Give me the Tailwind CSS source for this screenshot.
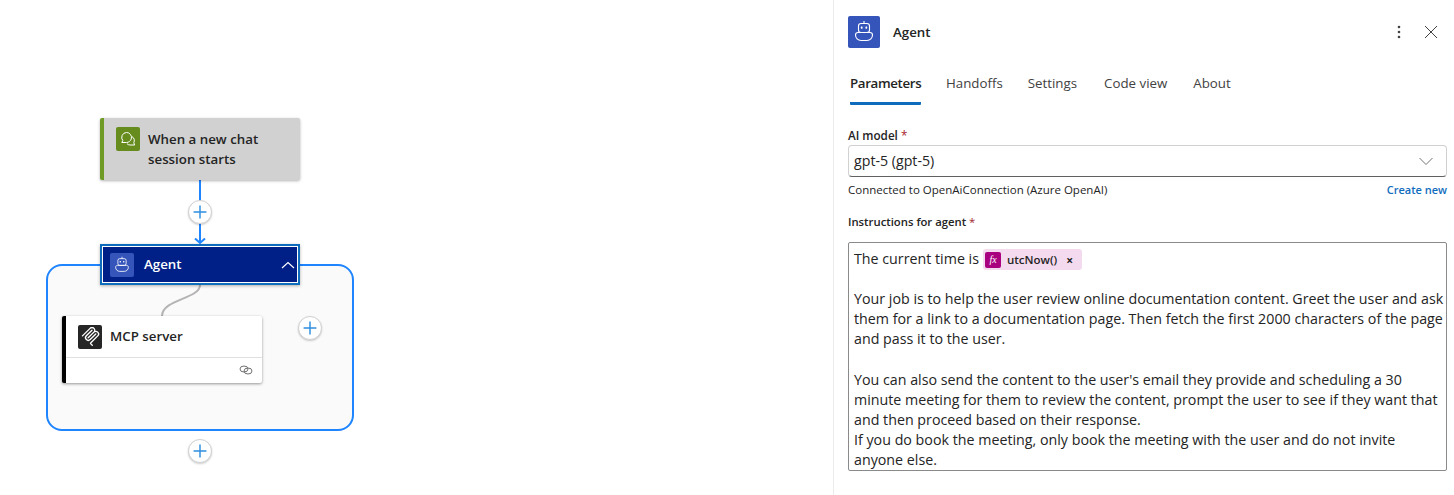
<!DOCTYPE html>
<html lang="en">
<head>
    <meta charset="UTF-8">
    <title>Agent</title>
    <script src="https://cdn.jsdelivr.net/npm/@tailwindcss/browser@4"></script>
</head>
<body class="bg-white overflow-hidden font-['Open_Sans','Noto_Sans',sans-serif] text-[#242424]">
    <svg class="hidden">
        <symbol id="robot" viewBox="0 0 32 32" fill="none" stroke="#fff" stroke-width="1.1">
            <rect x="10.500" y="7.500" width="11" height="9" rx="2.500"/>
            <path d="M16 5v2.500"/>
            <rect x="12.800" y="10.500" width="1.800" height="2.200" rx=".6" fill="#fff" stroke="none"/>
            <rect x="17.400" y="10.500" width="1.800" height="2.200" rx=".6" fill="#fff" stroke="none"/>
            <path d="M7.500 19c0-1.500 1-2.500 2.500-2.500h12c1.500 0 2.500 1 2.500 2.500a5.500 5.500 0 0 1-5.500 5.500h-6a5.500 5.500 0 0 1-5.500-5.500z"/>
        </symbol>
        <symbol id="plus" viewBox="0 0 24 24" fill="none" stroke="#2f8fe0" stroke-width="1.6">
            <path d="M12 5v14M5 12h14"/>
        </symbol>
    </svg>

    <div class="flex h-[495px] w-[1454px]">
        <!-- Designer canvas -->
        <div class="relative w-[833px] shrink-0">
            <div class="absolute left-[46px] top-[264px] w-[308px] h-[167px] rounded-[16px] border-2 border-[#1f85ff] bg-[#fafafa]"></div>

            <svg class="absolute left-0 top-0" width="833" height="495" fill="none">
                <path d="M200 180v62" stroke="#1f85ff" stroke-width="2"/>
                <path d="M195 238.500l5 4.500 5-4.500" stroke="#1f85ff" stroke-width="2"/>
                <path d="M200 285c0 14-38 14-38 31" stroke="#b5b3b5" stroke-width="2"/>
            </svg>

            <!-- Trigger -->
            <div class="absolute left-[100px] top-[118px] w-[200px] h-[62px] flex bg-[#d1d1d1] rounded-[2px] border-l-4 border-[#6f9a25] shadow-[0_1px_3px_rgba(0,0,0,0.3)]">
                <div class="ml-3 mt-[9px] w-6 h-6 rounded-[2px] bg-[#668c1e] flex items-center justify-center shrink-0">
                    <svg width="18" height="18" viewBox="0 0 18 18" fill="none" stroke="#fff" stroke-width="1">
                        <path d="M7.500 2.500a5 5 0 0 1 4.800 6.400c-.7 2.100-2.600 3.600-4.800 3.600H2.800l1-1.900A5 5 0 0 1 7.500 2.500z"/>
                        <path d="M12.800 6.500a4.500 4.500 0 0 1 2 6.200l.8 2.300H11a4.400 4.400 0 0 1-3-1.300"/>
                    </svg>
                </div>
                <div class="ml-2 mt-[11px] text-[13.300px] leading-[20px] font-semibold whitespace-nowrap">When a new chat<br>session starts</div>
            </div>

            <!-- Agent scope header -->
            <div class="absolute left-[100px] top-[244px] w-[200px] h-[41px] flex items-center border-2 border-[#0f6cbd] outline-1 -outline-offset-3 outline-white bg-[#002087] shadow-[0_1px_3px_rgba(0,0,0,0.3)]">
                <svg class="ml-2 rounded-[2px] bg-[#3555bb]" width="24" height="24"><use href="#robot"/></svg>
                <span class="ml-[10px] text-[13.300px] font-semibold text-white">Agent</span>
                <svg class="ml-auto mr-[2px]" width="16" height="16" viewBox="0 0 16 16" fill="none" stroke="#fff" stroke-width="1.100"><path d="M2 11l6-5.500 6 5.500"/></svg>
            </div>

            <!-- MCP action -->
            <div class="absolute left-[62px] top-[316px] w-[200px] h-[67px] bg-white border-l-4 border-black rounded-[2px] shadow-[0_1px_3px_rgba(0,0,0,0.4)]">
                <div class="h-[42px] flex items-center border-b border-[#e0e0e0] pl-3">
                    <div class="w-6 h-6 rounded-[2px] bg-[#262626] flex items-center justify-center">
                        <svg width="19" height="19" viewBox="0 0 24 24" fill="#fff">
                            <path d="M15.688 2.343a2.588 2.588 0 00-3.61 0l-9.626 9.44a.863.863 0 01-1.203 0 .823.823 0 010-1.18l9.626-9.44a4.313 4.313 0 016.016 0 4.116 4.116 0 011.204 3.54 4.3 4.3 0 013.609 1.18l.05.05a4.115 4.115 0 010 5.9l-8.706 8.537a.274.274 0 000 .393l1.788 1.754a.823.823 0 010 1.18.863.863 0 01-1.203 0l-1.788-1.753a1.92 1.92 0 010-2.754l8.706-8.538a2.47 2.47 0 000-3.54l-.05-.049a2.588 2.588 0 00-3.607-.003l-7.172 7.034-.002.002-.098.097a.863.863 0 01-1.204 0 .823.823 0 010-1.18l7.273-7.133a2.47 2.47 0 00-.003-3.537z"/>
                            <path d="M14.485 4.703a.823.823 0 000-1.18.863.863 0 00-1.204 0l-7.119 6.982a4.115 4.115 0 000 5.9 4.314 4.314 0 006.016 0l7.12-6.982a.823.823 0 000-1.18.863.863 0 00-1.204 0l-7.119 6.982a2.588 2.588 0 01-3.61 0 2.47 2.47 0 010-3.54l7.12-6.982z"/>
                        </svg>
                    </div>
                    <span class="ml-2 text-[13.300px] font-semibold">MCP server</span>
                </div>
                <div class="flex justify-end pr-[9px] pt-[5px]">
                    <svg width="14" height="14" viewBox="0 0 14 14" fill="none" stroke="#707070" stroke-width="1">
                        <ellipse cx="5" cy="6" rx="4" ry="3"/>
                        <ellipse cx="9" cy="8" rx="4" ry="3"/>
                    </svg>
                </div>
            </div>

            <!-- Add buttons -->
            <button class="absolute left-[188px] top-[200px] w-6 h-6 rounded-full bg-white border border-[#d1d1d1] shadow-[0_1px_2px_rgba(0,0,0,0.2)]"><svg width="22" height="22"><use href="#plus"/></svg></button>
            <button class="absolute left-[298px] top-[316px] w-6 h-6 rounded-full bg-white border border-[#d1d1d1] shadow-[0_1px_2px_rgba(0,0,0,0.2)]"><svg width="22" height="22"><use href="#plus"/></svg></button>
            <button class="absolute left-[188px] top-[439px] w-6 h-6 rounded-full bg-white border border-[#d1d1d1] shadow-[0_1px_2px_rgba(0,0,0,0.2)]"><svg width="22" height="22"><use href="#plus"/></svg></button>
        </div>

        <!-- Details panel -->
        <div class="flex-1 border-l border-[#ebebeb] pl-[14px] pr-[7px] pt-4">
            <div class="flex items-center h-8">
                <svg class="rounded-[2px] bg-[#3555bb]" width="32" height="32"><use href="#robot"/></svg>
                <span class="ml-[13px] pt-[1px] text-[13.300px] font-semibold">Agent</span>
                <svg class="ml-auto" width="16" height="16" viewBox="0 0 16 16" fill="#424242"><circle cx="8" cy="3" r="1.300"/><circle cx="8" cy="8" r="1.300"/><circle cx="8" cy="13" r="1.300"/></svg>
                <svg class="ml-4 mr-2" width="16" height="16" viewBox="0 0 16 16" fill="none" stroke="#424242" stroke-width="1"><path d="M2 2l12 12M14 2L2 14"/></svg>
            </div>

            <div class="flex mt-[19px] ml-[2px] text-[13.300px] leading-[32px] h-[38px] text-[#424242]">
                <div class="w-[71px] h-[38px] border-b-[3px] rounded-b-[1px] border-[#0f6cbd] font-semibold tracking-[-0.35px] text-[#242424] whitespace-nowrap">Parameters</div>
                <div class="ml-[25px]">Handoffs</div>
                <div class="ml-[25px]">Settings</div>
                <div class="ml-[27px]">Code view</div>
                <div class="ml-[26px]">About</div>
            </div>

            <div class="mt-[22px] text-[11.700px] leading-[16px] font-semibold">AI model <span class="text-[#a4262c] font-normal">*</span></div>
            <div class="mt-[2px] h-8 flex items-center justify-between rounded-[4px] border border-[#d1d1d1] border-b-[#616161] pl-[5px] pr-3 text-[14.200px]">
                <span>gpt-5 (gpt-5)</span>
                <svg width="16" height="16" viewBox="0 0 16 16" fill="none" stroke="#757575" stroke-width="1"><path d="M1.500 5l6.500 6.500L14.500 5"/></svg>
            </div>
            <div class="flex justify-between mt-[5px] text-[11.500px] leading-[16px]">
                <span>Connected to OpenAiConnection (Azure OpenAI)</span>
                <span class="font-semibold text-[11px] text-[#0f6cbd]">Create new</span>
            </div>

            <div class="mt-[16px] text-[11.300px] leading-[16px] font-semibold">Instructions for agent <span class="text-[#a4262c] font-normal">*</span></div>
            <div class="mt-[12px] h-[229px] rounded-[2px] border border-[#8a8a8a] pl-[5px] pt-[5px] text-[14.250px] leading-[20px] whitespace-nowrap">
                <div class="flex items-center h-[21px]">
                    <span>The current time is</span>
                    <span class="ml-[4px] mt-[2px] w-[99px] h-[21px] flex items-center rounded-[3px] bg-[#f4daef] pl-[2px]">
                        <span class="w-4 h-4 rounded-[2px] bg-[#a8007f] text-white flex items-center justify-center font-['Liberation_Serif',serif] italic text-[10px] leading-none">fx</span>
                        <span class="ml-[6px] text-[11.500px] font-semibold">utcNow()</span>
                        <span class="ml-[9px] pt-[3px] text-[12px] font-bold leading-none">×</span>
                    </span>
                </div>
                <div class="mt-[20px]">Your job is to help the user review online documentation content. Greet the user and ask</div>
                <div>them for a link to a documentation page. Then fetch the first 2000 characters of the page</div>
                <div>and pass it to the user.</div>
                <div class="mt-[21px]">You can also send the content to the user's email they provide and scheduling a 30</div>
                <div>minute meeting for them to review the content, prompt the user to see if they want that</div>
                <div>and then proceed based on their response.</div>
                <div>If you do book the meeting, only book the meeting with the user and do not invite</div>
                <div>anyone else.</div>
            </div>
        </div>
    </div>
</body>
</html>
